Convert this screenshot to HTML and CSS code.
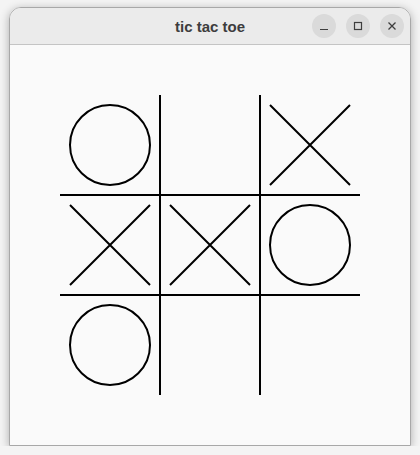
FILE: index.html
```html
<!DOCTYPE html>
<html lang="en">
<head>
  <meta charset="UTF-8">
  <meta name="viewport" content="width=device-width, initial-scale=1.0">
  <title>tic tac toe</title>
  <link rel="stylesheet" href="styles.css">
</head>
<body>
  <div class="window">
    <div class="titlebar">
      <div class="title">tic tac toe</div>
      <div class="controls">
        <div class="ctl">
          <svg width="10" height="10" viewBox="0 0 10 10"><path d="M1 8.5h8" stroke="#3d3d3d" stroke-width="1.2"/></svg>
        </div>
        <div class="ctl">
          <svg width="10" height="10" viewBox="0 0 10 10"><rect x="1.5" y="1.5" width="7" height="7" fill="none" stroke="#3d3d3d" stroke-width="1.2"/></svg>
        </div>
        <div class="ctl">
          <svg width="10" height="10" viewBox="0 0 10 10"><path d="M1.5 1.5l7 7M8.5 1.5l-7 7" stroke="#3d3d3d" stroke-width="1.3"/></svg>
        </div>
      </div>
    </div>
    <div class="content">
      <svg class="board" width="300" height="300" viewBox="0 0 300 300">
        <g stroke="#000" stroke-width="2" fill="none">
          <!-- grid -->
          <line x1="100" y1="0" x2="100" y2="300"/>
          <line x1="200" y1="0" x2="200" y2="300"/>
          <line x1="0" y1="100" x2="300" y2="100"/>
          <line x1="0" y1="200" x2="300" y2="200"/>
          <!-- row 1 -->
          <circle cx="50" cy="50" r="40"/>
          <path d="M210 10L290 90M290 10L210 90"/>
          <!-- row 2 -->
          <path d="M10 110L90 190M90 110L10 190"/>
          <path d="M110 110L190 190M190 110L110 190"/>
          <circle cx="250" cy="150" r="40"/>
          <!-- row 3 -->
          <circle cx="50" cy="250" r="40"/>
        </g>
      </svg>
    </div>
  </div>
</body>
</html>
```

FILE: styles.css
```css
body {
  margin: 0;
  background: #f4f4f4;
  font-family: 'Liberation Sans', Arial, sans-serif;
}
.window {
  margin: 7px 0 0 9px;
  width: 400px;
  border: 1px solid #a8a8a8;
  border-radius: 12px 12px 0 0;
  box-shadow: 0 2px 10px rgba(0, 0, 0, 0.3);
  overflow: hidden;
}
.titlebar {
  position: relative;
  height: 36px;
  background: #ebebeb;
  border-bottom: 1px solid #c4c4c4;
  display: flex;
  align-items: center;
  justify-content: center;
}
.title {
  font-size: 15px;
  font-weight: bold;
  color: #3d3d3d;
}
.controls {
  position: absolute;
  right: 6px;
  top: 6px;
  display: flex;
  gap: 10px;
}
.ctl {
  width: 24px;
  height: 24px;
  border-radius: 50%;
  background: #dadada;
  display: flex;
  align-items: center;
  justify-content: center;
}
.content {
  height: 400px;
  background: #fafafa;
  display: flex;
  align-items: center;
  justify-content: center;
}
.board {
  display: block;
}
```
